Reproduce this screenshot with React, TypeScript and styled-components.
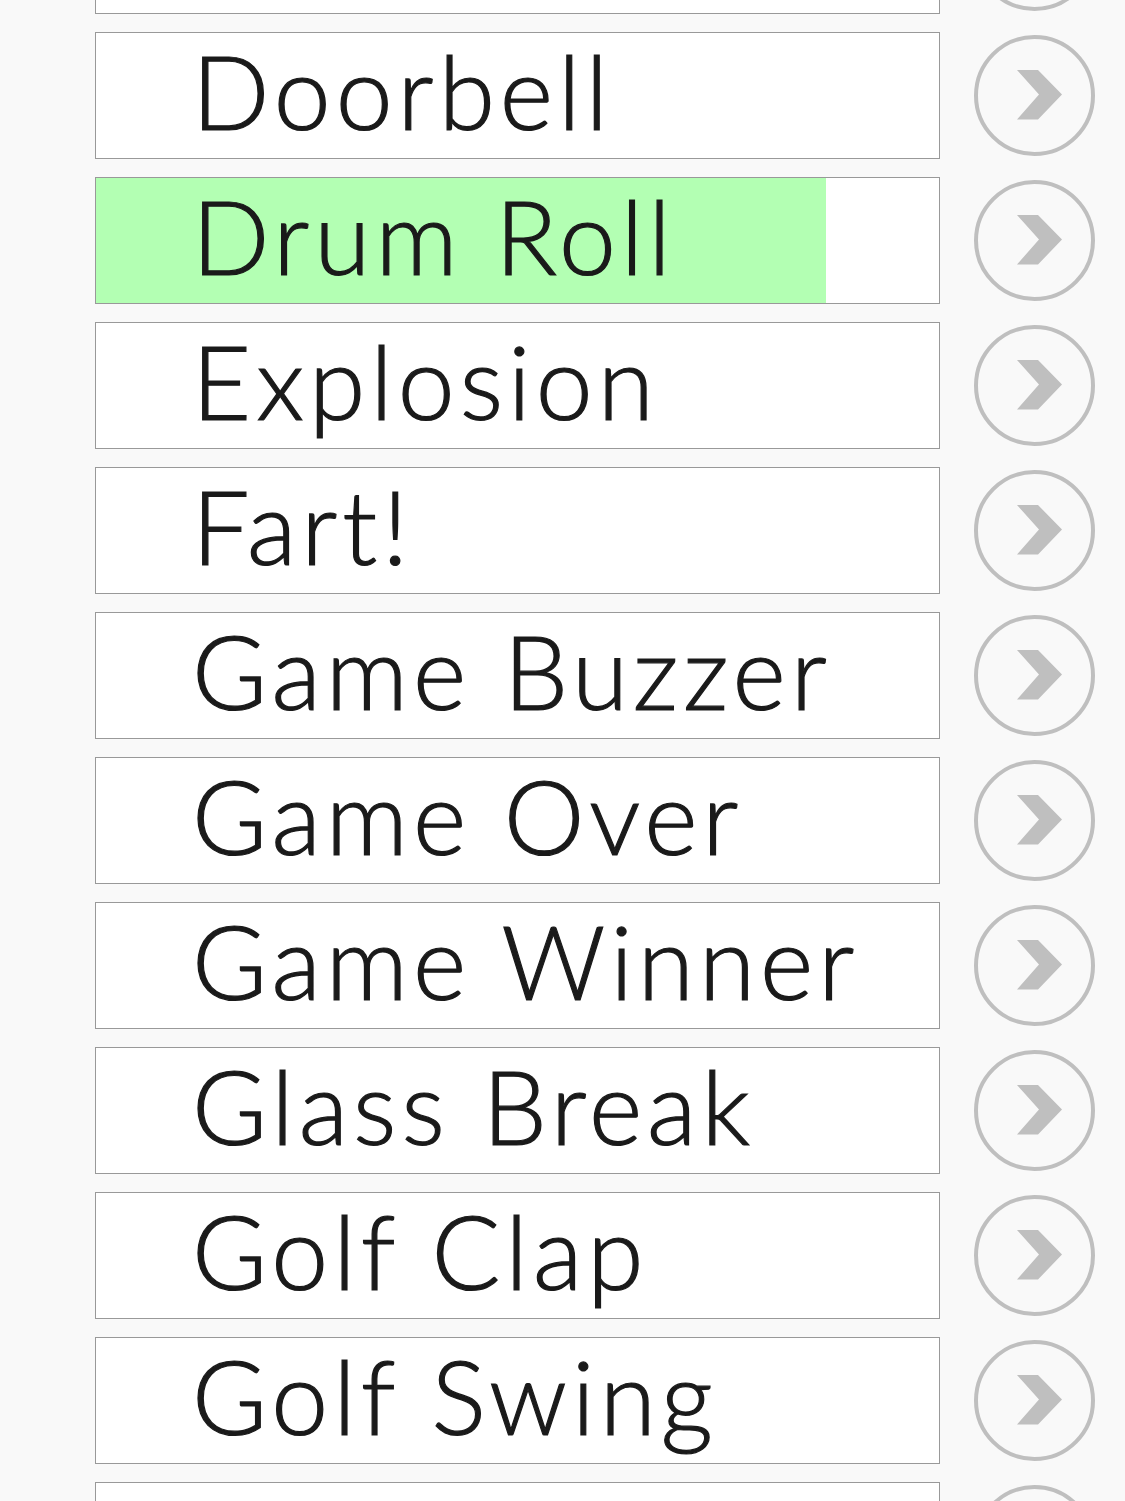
import React from "react";
import styled, { createGlobalStyle } from "styled-components";

const GlobalStyle = createGlobalStyle`
  html, body {
    margin: 0;
    padding: 0;
    background: #f9f9f9;
    overflow: hidden;
  }
  body {
    font-family: "Lato", "Open Sans", sans-serif;
  }
`;

const Page = styled.div`
  width: 1125px;
  height: 1501px;
  overflow: hidden;
  background: #f9f9f9;
`;

const List = styled.div`
  display: flex;
  flex-direction: column;
  gap: 18px;
  margin-top: -113px;
  padding-left: 95px;
`;

const Item = styled.div`
  display: flex;
  align-items: center;
  gap: 34px;
`;

const SoundBox = styled.div<{ $progress: number }>`
  box-sizing: border-box;
  width: 845px;
  height: 127px;
  border: 1px solid #999999;
  background: ${({ $progress }) =>
    $progress > 0
      ? `linear-gradient(to right, #b3ffb3 0, #b3ffb3 ${$progress}%, #ffffff ${$progress}%, #ffffff 100%)`
      : "#ffffff"};
  display: flex;
  align-items: center;
  padding: 0 0 10px 96px;
`;

const Label = styled.span`
  font-family: "Lato", "Open Sans", sans-serif;
  font-weight: 300;
  font-size: 102px;
  line-height: 115px;
  letter-spacing: 5px;
  color: #1a1a1a;
  -webkit-text-stroke: 1.2px #1a1a1a;
  white-space: nowrap;
`;

const PlayButton = styled.button`
  box-sizing: border-box;
  width: 121px;
  height: 121px;
  border-radius: 50%;
  border: 4px solid #bfbfbf;
  background: transparent;
  padding: 0;
  display: flex;
  align-items: center;
  justify-content: center;
  cursor: pointer;
  flex: none;
`;

const Chevron = () => (
  <svg width="113" height="113" viewBox="4 4 113 113" aria-hidden="true">
    <polygon points="43,35 64,35 88,59.5 64,84.5 43,84.5 65,59.5" fill="#bfbfbf" />
  </svg>
);

const sounds: { name: string; progress: number }[] = [
  { name: "Crickets", progress: 0 },
  { name: "Doorbell", progress: 0 },
  { name: "Drum Roll", progress: 86.6 },
  { name: "Explosion", progress: 0 },
  { name: "Fart!", progress: 0 },
  { name: "Game Buzzer", progress: 0 },
  { name: "Game Over", progress: 0 },
  { name: "Game Winner", progress: 0 },
  { name: "Glass Break", progress: 0 },
  { name: "Golf Clap", progress: 0 },
  { name: "Golf Swing", progress: 0 },
  { name: "Gunshot", progress: 0 },
];

export default function App() {
  return (
    <Page>
      <GlobalStyle />
      <List>
        {sounds.map((s) => (
          <Item key={s.name}>
            <SoundBox $progress={s.progress}>
              <Label>{s.name}</Label>
            </SoundBox>
            <PlayButton aria-label={`Play ${s.name}`}>
              <Chevron />
            </PlayButton>
          </Item>
        ))}
      </List>
    </Page>
  );
}
